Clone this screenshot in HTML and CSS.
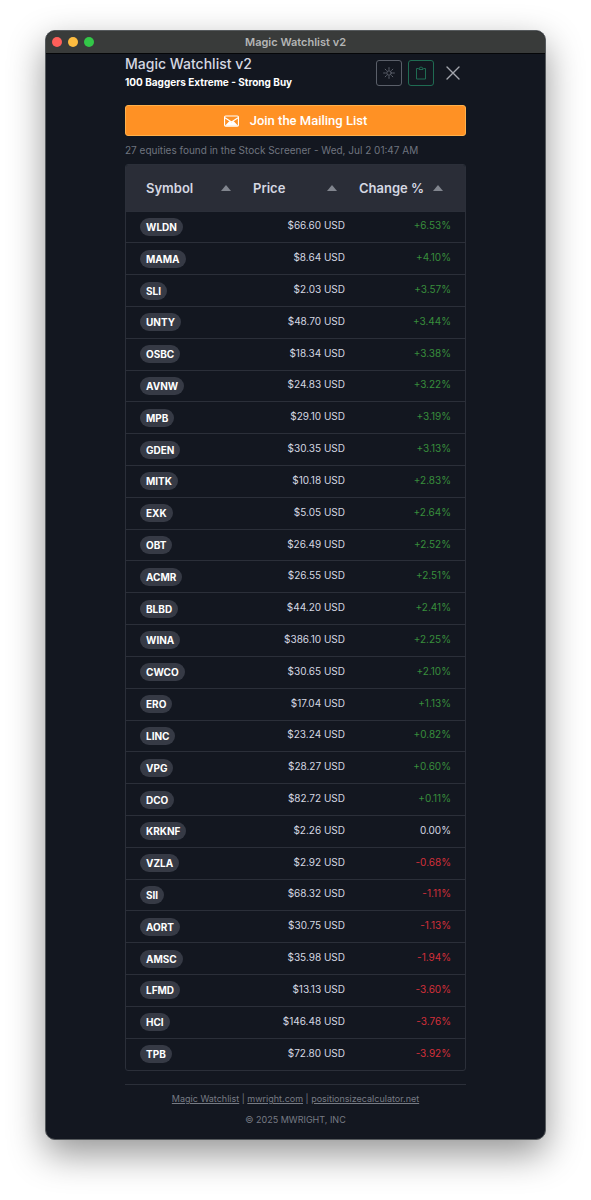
FILE: index.html
```
<!DOCTYPE html>
<html lang="en">
<head>
  <meta charset="UTF-8" />
  <meta name="viewport" content="width=device-width, initial-scale=1.0"/>
  <title>Magic Watchlist v2</title>
  <link rel="stylesheet" href="styles.css">
</head>
<body>
  <div class="window">
    <div class="titlebar">
      <div class="lights">
        <span class="light red"></span>
        <span class="light yellow"></span>
        <span class="light green"></span>
      </div>
      <span class="titlebar-text">Magic Watchlist v2</span>
    </div>

    <main class="content">
      <header class="header">
        <div>
          <h1>Magic Watchlist v2</h1>
          <h2>100 Baggers Extreme - Strong Buy</h2>
        </div>
        <div class="actions">
          <button class="icon-btn" aria-label="Toggle theme">
            <svg width="12" height="12" viewBox="0 0 16 16" fill="none" stroke="currentColor" stroke-width="1.1" stroke-linecap="round">
              <circle cx="8" cy="8" r="3"/>
              <path d="M8 .8v2.4M8 12.8v2.4M.8 8h2.4M12.8 8h2.4M2.9 2.9l1.6 1.6M11.5 11.5l1.6 1.6M2.9 13.1l1.6-1.6M11.5 4.5l1.6-1.6"/>
            </svg>
          </button>
          <button class="icon-btn copy" aria-label="Copy to clipboard">
            <svg width="12" height="14" viewBox="0 0 12 14" fill="none" stroke="currentColor">
              <path d="M3.500 2.500h-2v10.500h9v-10.500h-2"/>
              <path d="M4 3.500v-1.500h1c0-1.500 2-1.500 2 0h1v1.500z"/>
            </svg>
          </button>
          <button class="close-btn" aria-label="Close">
            <svg width="14" height="14" viewBox="0 0 14 14" fill="none" stroke="currentColor" stroke-width="1.4" stroke-linecap="round">
              <path d="M1 1l12 12M13 1L1 13"/>
            </svg>
          </button>
        </div>
      </header>

      <button class="join">
        <svg width="15" height="12" viewBox="0 0 16 12">
          <rect x=".6" y=".6" width="14.800" height="10.800" rx="1.200" fill="none" stroke="currentColor" stroke-width="1.200"/>
          <path d="M1 11l4.800-5L8 7.500 10.200 6 15 11z" fill="currentColor"/>
          <path d="M1 2.500l7 4.600 7-4.600" fill="none" stroke="currentColor" stroke-width="1.200"/>
        </svg>
        Join the Mailing List
      </button>

      <p class="found">27 equities found in the Stock Screener - Wed, Jul 2 01:47 AM</p>

      <div class="table-wrap">
        <table>
          <thead>
            <tr>
              <th class="col-symbol"><button>Symbol <span class="arrow"></span></button></th>
              <th class="col-price"><button>Price <span class="arrow"></span></button></th>
              <th class="col-change"><button>Change % <span class="arrow"></span></button></th>
            </tr>
          </thead>
          <tbody>
            <tr><td><span class="badge">WLDN</span></td><td>$66.60 USD</td><td class="up">+6.53%</td></tr>
            <tr><td><span class="badge">MAMA</span></td><td>$8.64 USD</td><td class="up">+4.10%</td></tr>
            <tr><td><span class="badge">SLI</span></td><td>$2.03 USD</td><td class="up">+3.57%</td></tr>
            <tr><td><span class="badge">UNTY</span></td><td>$48.70 USD</td><td class="up">+3.44%</td></tr>
            <tr><td><span class="badge">OSBC</span></td><td>$18.34 USD</td><td class="up">+3.38%</td></tr>
            <tr><td><span class="badge">AVNW</span></td><td>$24.83 USD</td><td class="up">+3.22%</td></tr>
            <tr><td><span class="badge">MPB</span></td><td>$29.10 USD</td><td class="up">+3.19%</td></tr>
            <tr><td><span class="badge">GDEN</span></td><td>$30.35 USD</td><td class="up">+3.13%</td></tr>
            <tr><td><span class="badge">MITK</span></td><td>$10.18 USD</td><td class="up">+2.83%</td></tr>
            <tr><td><span class="badge">EXK</span></td><td>$5.05 USD</td><td class="up">+2.64%</td></tr>
            <tr><td><span class="badge">OBT</span></td><td>$26.49 USD</td><td class="up">+2.52%</td></tr>
            <tr><td><span class="badge">ACMR</span></td><td>$26.55 USD</td><td class="up">+2.51%</td></tr>
            <tr><td><span class="badge">BLBD</span></td><td>$44.20 USD</td><td class="up">+2.41%</td></tr>
            <tr><td><span class="badge">WINA</span></td><td>$386.10 USD</td><td class="up">+2.25%</td></tr>
            <tr><td><span class="badge">CWCO</span></td><td>$30.65 USD</td><td class="up">+2.10%</td></tr>
            <tr><td><span class="badge">ERO</span></td><td>$17.04 USD</td><td class="up">+1.13%</td></tr>
            <tr><td><span class="badge">LINC</span></td><td>$23.24 USD</td><td class="up">+0.82%</td></tr>
            <tr><td><span class="badge">VPG</span></td><td>$28.27 USD</td><td class="up">+0.60%</td></tr>
            <tr><td><span class="badge">DCO</span></td><td>$82.72 USD</td><td class="up">+0.11%</td></tr>
            <tr><td><span class="badge">KRKNF</span></td><td>$2.26 USD</td><td>0.00%</td></tr>
            <tr><td><span class="badge">VZLA</span></td><td>$2.92 USD</td><td class="down">-0.68%</td></tr>
            <tr><td><span class="badge">SII</span></td><td>$68.32 USD</td><td class="down">-1.11%</td></tr>
            <tr><td><span class="badge">AORT</span></td><td>$30.75 USD</td><td class="down">-1.13%</td></tr>
            <tr><td><span class="badge">AMSC</span></td><td>$35.98 USD</td><td class="down">-1.94%</td></tr>
            <tr><td><span class="badge">LFMD</span></td><td>$13.13 USD</td><td class="down">-3.60%</td></tr>
            <tr><td><span class="badge">HCI</span></td><td>$146.48 USD</td><td class="down">-3.76%</td></tr>
            <tr><td><span class="badge">TPB</span></td><td>$72.80 USD</td><td class="down">-3.92%</td></tr>
          </tbody>
        </table>
      </div>

      <footer class="footer">
        <p><a href="#">Magic Watchlist</a> | <a href="#">mwright.com</a> | <a href="#">positionsizecalculator.net</a></p>
        <p>© 2025 MWRIGHT, INC</p>
      </footer>
    </main>
  </div>
</body>
</html>
```
FILE: styles.css
```
* {
  box-sizing: border-box;
}
body {
  margin: 0;
  padding: 30px 45px 60px;
  min-height: 100vh;
  display: flex;
  background: #fff;
  font-family: Inter, "Liberation Sans", sans-serif;
  font-size: 10px;
  color: #d5d8e2;
}
button {
  font-family: inherit;
  color: inherit;
  background: none;
  border: none;
  padding: 0;
  cursor: pointer;
}
h1, h2, p {
  margin: 0;
}
.window {
  flex: 1;
  display: flex;
  flex-direction: column;
  background: #131720;
  border: 1px solid #565a5d;
  border-radius: 10px;
  overflow: hidden;
  box-shadow: 0 14px 36px rgba(0, 0, 0, 0.42);
}
.titlebar {
  display: grid;
  grid-template-columns: 1fr auto 1fr;
  align-items: center;
  height: 23px;
  padding: 0 6px;
  background: #393b3a;
  border-bottom: 1px solid #050608;
}
.titlebar-text {
  font-size: 11px;
  font-weight: 600;
  color: #b4b5b5;
}
.lights {
  display: flex;
  gap: 6px;
}
.light {
  width: 10px;
  height: 10px;
  border-radius: 50%;
}
.light.red { background: #ff5f5a; }
.light.yellow { background: #fdbc40; }
.light.green { background: #33c748; }

.content {
  flex: 1;
  display: flex;
  flex-direction: column;
  padding: 0 79px 11px;
}
.header {
  display: flex;
  justify-content: space-between;
  align-items: flex-start;
}
h1 {
  font-size: 14px;
  font-weight: 500;
  line-height: 20px;
}
h2 {
  font-size: 10px;
  font-weight: 700;
  line-height: 16px;
  color: #fff;
}
.actions {
  display: flex;
  gap: 6px;
  padding-top: 6px;
}
.icon-btn, .close-btn {
  display: flex;
  align-items: center;
  justify-content: center;
  width: 26px;
  height: 26px;
}
.icon-btn {
  border: 1px solid #5a5f69;
  border-radius: 3px;
  color: #6c717c;
}
.icon-btn.copy {
  border-color: #1f6b52;
  color: #1f6b52;
}
.close-btn {
  color: #a3a6ad;
}
.join {
  display: flex;
  align-items: center;
  justify-content: center;
  gap: 11px;
  height: 31px;
  margin-top: 15px;
  background: #ff9124;
  border: 1px solid #ffb04a;
  border-radius: 3px;
  font-family: Roboto, Inter, sans-serif;
  font-size: 13px;
  font-weight: 500;
  color: #fff;
}
.found {
  margin: 6px 0;
  font-size: 10px;
  line-height: 16px;
  color: #6f747f;
}

.table-wrap {
  flex: 1;
  display: flex;
  border: 1px solid #2b2f39;
  border-radius: 3px;
  overflow: hidden;
}
table {
  width: 100%;
  table-layout: fixed;
  border-collapse: collapse;
}
thead {
  background: #2a2d37;
}
th {
  height: 46px;
  padding: 0 22px 0 20px;
}
.col-symbol {
  width: 107px;
  padding-right: 2px;
}
.col-price {
  width: 126px;
}
.col-change {
  padding-left: 0;
}
th button {
  display: flex;
  align-items: center;
  justify-content: space-between;
  width: 100%;
  font-size: 13px;
  font-weight: 600;
}
.arrow {
  border: 5px solid transparent;
  border-top: none;
  border-bottom: 6px solid #81858e;
}
td {
  height: 31px;
  padding: 0 14px 3px;
  border-top: 1px solid #2b2f39;
  text-align: right;
}
td:first-child {
  padding-bottom: 0;
  text-align: left;
}
.badge {
  display: inline-block;
  padding: 0 6px;
  border-radius: 9px;
  background: #363a45;
  font-size: 10px;
  font-weight: 700;
  line-height: 18px;
  color: #fff;
}
.up { color: #388e3c; }
.down { color: #d32f3a; }

.footer {
  margin-top: 13px;
  padding-top: 6px;
  border-top: 1px solid #2b2f39;
  font-size: 9px;
  line-height: 16px;
  text-align: center;
  color: #777b84;
}
.footer p + p {
  margin-top: 5px;
}
.footer a {
  color: inherit;
}
```
